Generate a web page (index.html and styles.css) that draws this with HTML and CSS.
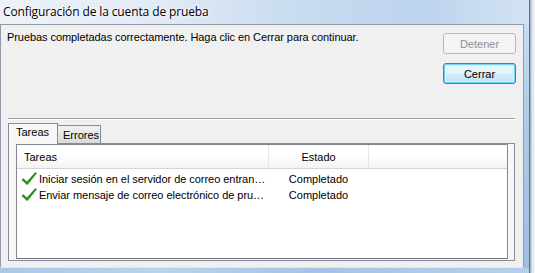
FILE: index.html
```html
<!DOCTYPE html>
<html lang="es">
<head>
<meta charset="utf-8">
<title>Configuración de la cuenta de prueba</title>
<link rel="stylesheet" href="styles.css">
</head>
<body>
<div class="screen">
  <div class="win">
    <div class="titlebar"><span class="title">Configuración de la cuenta de prueba</span></div>
    <div class="mid">
      <div class="client">
        <div class="top">
          <p class="msg">Pruebas completadas correctamente. Haga clic en Cerrar para continuar.</p>
          <div class="btns">
            <button class="btn disabled">Detener</button>
            <button class="btn default">Cerrar</button>
          </div>
        </div>
        <div class="sep"></div>
        <div class="tabs">
          <div class="tabstrip">
            <div class="tab sel">Tareas</div>
            <div class="tab">Errores</div>
          </div>
          <div class="tabpanel">
            <div class="listview">
              <div class="lvhead">
                <div class="hcol c1">Tareas</div>
                <div class="hcol c2">Estado</div>
                <div class="hcol c3"></div>
              </div>
              <div class="rows">
                <div class="row">
                  <div class="cell c1">
                    <svg class="check" width="16" height="16" viewBox="0 0 16 16"><path d="M0.8 8.8 L2.4 7.6 L5.8 11 L14.4 1.4 L15.6 2.3 L6.3 13.8 Z" fill="#1f9a1f" stroke="#0d6b0d" stroke-width="0.5" stroke-linejoin="round"/></svg>
                    <span class="txt">Iniciar sesión en el servidor de correo entran…</span>
                  </div>
                  <div class="cell c2">Completado</div>
                </div>
                <div class="row">
                  <div class="cell c1">
                    <svg class="check" width="16" height="16" viewBox="0 0 16 16"><path d="M0.8 8.8 L2.4 7.6 L5.8 11 L14.4 1.4 L15.6 2.3 L6.3 13.8 Z" fill="#1f9a1f" stroke="#0d6b0d" stroke-width="0.5" stroke-linejoin="round"/></svg>
                    <span class="txt">Enviar mensaje de correo electrónico de pru…</span>
                  </div>
                  <div class="cell c2">Completado</div>
                </div>
              </div>
            </div>
          </div>
        </div>
      </div>
      <div class="rframe"></div>
    </div>
    <div class="bframe"></div>
  </div>
  <div class="bgwin"></div>
</div>
</body>
</html>
```

FILE: styles.css
```css
* { box-sizing: border-box; }
html, body { margin: 0; padding: 0; }
body {
  width: 535px;
  height: 273px;
  overflow: hidden;
  font-family: "Liberation Sans", Arial, sans-serif;
  font-size: 11px;
  color: #000;
}
.screen {
  display: flex;
  width: 535px;
  height: 273px;
  overflow: hidden;
}
.win {
  width: 529px;
  display: flex;
  flex-direction: column;
  flex-shrink: 0;
}
.titlebar {
  height: 24px;
  background: linear-gradient(90deg, #edf2f8 0%, #e2eaf4 30%, #c9dcf0 55%, #bcd4ed 80%, #d3e3f4 100%);
  padding: 4px 0 0 3px;
}
.title {
  font-family: "Open Sans", "Noto Sans", sans-serif;
  font-size: 12px;
  line-height: 16px;
  letter-spacing: -0.12px;
  color: #000;
  text-shadow: 0 0 6px #fff, 0 0 3px #fff;
}
.mid {
  display: flex;
  height: 244px;
}
.client {
  width: 524px;
  height: 244px;
  background: #f0f0f0;
  border: 1px solid #8e9aa8;
  border-bottom-color: #e2e7ed;
  display: flex;
  flex-direction: column;
}
.rframe {
  width: 5px;
  background: linear-gradient(180deg, #c9dcf0 0%, #aecbe9 40%, #9dbfe3 100%);
}
.bframe {
  height: 5px;
  background: linear-gradient(90deg, #a9c8e8 0%, #b8d3ee 30%, #a3c4e6 60%, #b5d0ec 100%);
}
.bgwin {
  flex: 1;
  border-left: 1px solid #5d6f84;
  background: linear-gradient(90deg, #8fa3b8 0px, #dfe5ec 2px, #f3f3f3 100%);
}
.top {
  display: flex;
  padding: 6px 7px 0 6px;
}
.msg {
  flex: 1;
  margin: 0;
  line-height: 13px;
  letter-spacing: -0.07px;
}
.btns {
  display: flex;
  flex-direction: column;
  gap: 9px;
  margin-top: 2px;
}
.btn {
  width: 73px;
  height: 21px;
  padding: 0;
  font-family: "Liberation Sans", Arial, sans-serif;
  font-size: 11px;
  border-radius: 3px;
}
.btn.disabled {
  color: #8f8f8f;
  background: #f4f4f4;
  border: 1px solid #b5b9bc;
}
.btn.default {
  color: #000;
  border: 1px solid #3c7fb1;
  background: linear-gradient(180deg, #eaf6fd 0%, #e3f3fc 48%, #d2ebf8 52%, #c0e2f4 100%);
  box-shadow: inset 0 0 0 1px #74d2f6, inset 0 0 0 2px #d9f1fb;
}
.sep {
  height: 1px;
  background: #a0a0a0;
  margin: 34px 8px 0 7px;
  box-shadow: 0 1px 0 #fff;
}
.tabs {
  margin: 4px 8px 0 7px;
}
.tabstrip {
  display: flex;
  align-items: flex-end;
  height: 20px;
}
.tab {
  height: 18px;
  width: 44px;
  padding: 2px 0 0 5px;
  line-height: 14px;
  border: 1px solid #898c95;
  border-bottom: none;
  margin-left: -1px;
  background: linear-gradient(180deg, #f2f2f2 0%, #e6e6e6 50%, #d9d9d9 100%);
}
.tab.sel {
  margin-left: 0;
  width: 50px;
  height: 21px;
  margin-bottom: -1px;
  padding: 1px 0 0 7px;
  background: #f7f7f7;
  position: relative;
  z-index: 1;
}
.tabpanel {
  height: 118px;
  border: 1px solid #898c95;
  background: #f7f7f7;
  padding: 0 0 0 7px;
}
.listview {
  width: 492px;
  height: 115px;
  border: 1px solid #828790;
  border-bottom-color: #6f737a;
  background: #fff;
}
.lvhead {
  display: flex;
  height: 24px;
  border-bottom: 1px solid #d5d5d5;
  background: linear-gradient(180deg, #ffffff 0%, #ffffff 45%, #f2f3f4 100%);
}
.hcol {
  line-height: 23px;
  padding-top: 1px;
  border-right: 1px solid #e3e5e7;
}
.hcol.c1 {
  width: 252px;
  padding-left: 7px;
}
.hcol.c2 {
  width: 100px;
  text-align: center;
}
.hcol.c3 {
  flex: 1;
  border-right: none;
}
.rows {
  padding-top: 2px;
}
.row {
  display: flex;
  height: 16px;
  line-height: 16px;
}
.cell.c1 {
  width: 251px;
  display: flex;
  align-items: center;
  padding-left: 4px;
  white-space: nowrap;
  overflow: hidden;
}
.check {
  flex-shrink: 0;
  margin-right: 2px;
}
.txt {
  letter-spacing: -0.04px;
}
.cell.c2 {
  width: 101px;
  text-align: center;
}
```
